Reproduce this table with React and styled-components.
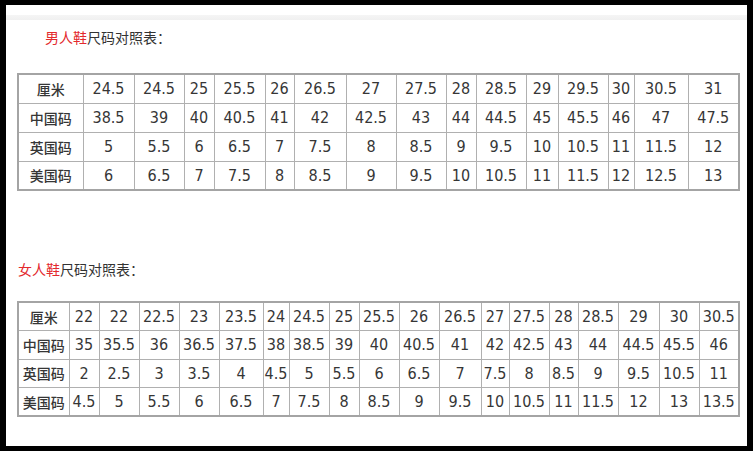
import React from 'react';
import styled, { createGlobalStyle } from 'styled-components';

const GlobalStyle = createGlobalStyle`
  html, body {
    margin: 0;
    padding: 0;
    background: #000000;
  }
`;

const Page = styled.div`
  box-sizing: border-box;
  width: 753px;
  height: 451px;
  padding: 5px 6px 5px 6px;
  background: #000000;
`;

const Panel = styled.div`
  box-sizing: border-box;
  height: 441px;
  background: #ffffff;
  padding-top: 10px;
  display: flex;
  flex-direction: column;
`;

const TopStrip = styled.div`
  height: 5px;
  background: linear-gradient(#f5f5f5, #f0f0f0);
`;

const Heading = styled.div`
  font-family: "Noto Sans CJK SC", "Noto Sans", sans-serif;
  font-size: 14px;
  line-height: 20px;
  color: #333333;
  padding-left: ${(p) => p.$indent}px;
  margin-top: ${(p) => p.$top}px;
`;

const Red = styled.span`
  color: #e3292d;
`;

const SizeTable = styled.table`
  border-collapse: collapse;
  table-layout: fixed;
  width: 721px;
  margin-left: 11px;
  margin-top: ${(p) => p.$top}px;
  border: 2px solid #a4a4a4;
  color: #363636;
`;

const Row = styled.tr`
  height: ${(p) => p.$h}px;
`;

const Cell = styled.td`
  border: 1px solid #b0b0b0;
  padding: 0;
  text-align: center;
  vertical-align: middle;
  font-family: "DejaVu Sans Condensed", "Liberation Sans", sans-serif;
  font-size: 16px;
  white-space: nowrap;
  overflow: hidden;
`;

const LabelCell = styled(Cell)`
  font-family: "Noto Sans CJK SC", sans-serif;
  font-size: 14px;
  font-weight: 500;
`;

const menWidths = [65, 51, 50, 30, 51, 29, 52, 50, 50, 30, 50, 32, 50, 26, 54, 51];
const menRows = [
  ['厘米', '24.5', '24.5', '25', '25.5', '26', '26.5', '27', '27.5', '28', '28.5', '29', '29.5', '30', '30.5', '31'],
  ['中国码', '38.5', '39', '40', '40.5', '41', '42', '42.5', '43', '44', '44.5', '45', '45.5', '46', '47', '47.5'],
  ['英国码', '5', '5.5', '6', '6.5', '7', '7.5', '8', '8.5', '9', '9.5', '10', '10.5', '11', '11.5', '12'],
  ['美国码', '6', '6.5', '7', '7.5', '8', '8.5', '9', '9.5', '10', '10.5', '11', '11.5', '12', '12.5', '13'],
];

const womenWidths = [51, 30, 40, 40, 40, 44, 26, 40, 30, 40, 40, 42, 28, 40, 29, 40, 41, 40, 40];
const womenRows = [
  ['厘米', '22', '22', '22.5', '23', '23.5', '24', '24.5', '25', '25.5', '26', '26.5', '27', '27.5', '28', '28.5', '29', '30', '30.5'],
  ['中国码', '35', '35.5', '36', '36.5', '37.5', '38', '38.5', '39', '40', '40.5', '41', '42', '42.5', '43', '44', '44.5', '45.5', '46'],
  ['英国码', '2', '2.5', '3', '3.5', '4', '4.5', '5', '5.5', '6', '6.5', '7', '7.5', '8', '8.5', '9', '9.5', '10.5', '11'],
  ['美国码', '4.5', '5', '5.5', '6', '6.5', '7', '7.5', '8', '8.5', '9', '9.5', '10', '10.5', '11', '11.5', '12', '13', '13.5'],
];

const ChartTable = ({ widths, rows, rowHeight, top }) => (
  <SizeTable $top={top}>
    <colgroup>
      {widths.map((w, i) => (
        <col key={i} style={{ width: w }} />
      ))}
    </colgroup>
    <tbody>
      {rows.map((row, r) => (
        <Row key={r} $h={rowHeight}>
          <LabelCell>{row[0]}</LabelCell>
          {row.slice(1).map((v, i) => (
            <Cell key={i}>{v}</Cell>
          ))}
        </Row>
      ))}
    </tbody>
  </SizeTable>
);

const App = () => (
  <>
    <GlobalStyle />
    <Page>
      <Panel>
        <TopStrip />
        <Heading $indent={39} $top={7}>
          <Red>男人鞋</Red>尺码对照表：
        </Heading>
        <ChartTable widths={menWidths} rows={menRows} rowHeight={29} top={26} />
        <Heading $indent={12} $top={68}>
          <Red>女人鞋</Red>尺码对照表：
        </Heading>
        <ChartTable widths={womenWidths} rows={womenRows} rowHeight={28.5} top={22} />
      </Panel>
    </Page>
  </>
);

export default App;
